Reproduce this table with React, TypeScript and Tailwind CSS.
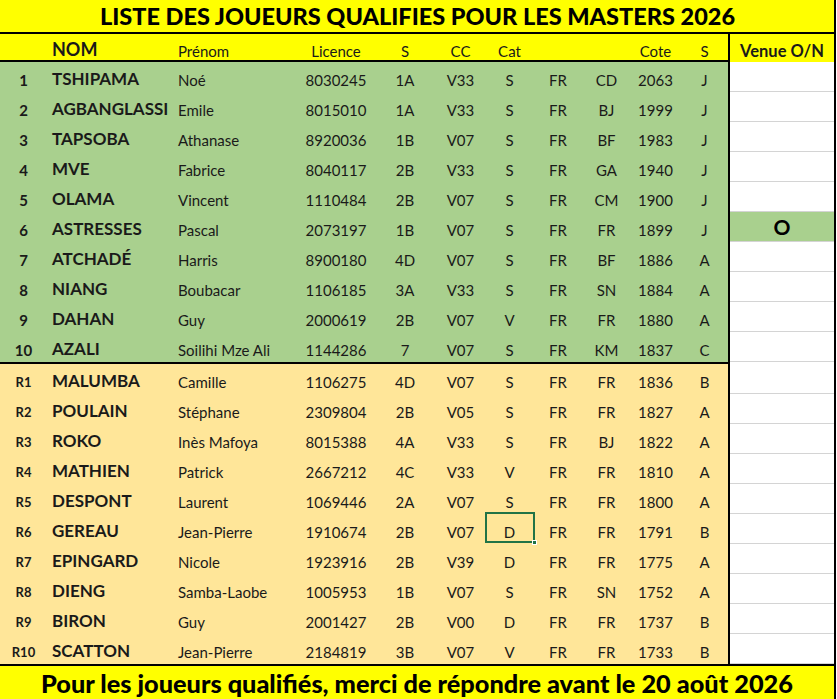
import React from 'react';

// Ligne : rang, nom, prénom, licence, S, CC, Cat, fédé, pays, cote, statut
type Row = [string, string, string, string, string, string, string, string, string, string, string];

const qualifies: Row[] = [
    ['1', 'TSHIPAMA', 'Noé', '8030245', '1A', 'V33', 'S', 'FR', 'CD', '2063', 'J'],
    ['2', 'AGBANGLASSI', 'Emile', '8015010', '1A', 'V33', 'S', 'FR', 'BJ', '1999', 'J'],
    ['3', 'TAPSOBA', 'Athanase', '8920036', '1B', 'V07', 'S', 'FR', 'BF', '1983', 'J'],
    ['4', 'MVE', 'Fabrice', '8040117', '2B', 'V33', 'S', 'FR', 'GA', '1940', 'J'],
    ['5', 'OLAMA', 'Vincent', '1110484', '2B', 'V07', 'S', 'FR', 'CM', '1900', 'J'],
    ['6', 'ASTRESSES', 'Pascal', '2073197', '1B', 'V07', 'S', 'FR', 'FR', '1899', 'J'],
    ['7', 'ATCHADÉ', 'Harris', '8900180', '4D', 'V07', 'S', 'FR', 'BF', '1886', 'A'],
    ['8', 'NIANG', 'Boubacar', '1106185', '3A', 'V33', 'S', 'FR', 'SN', '1884', 'A'],
    ['9', 'DAHAN', 'Guy', '2000619', '2B', 'V07', 'V', 'FR', 'FR', '1880', 'A'],
    ['10', 'AZALI', 'Soilihi Mze Ali', '1144286', '7', 'V07', 'S', 'FR', 'KM', '1837', 'C'],
];

const remplacants: Row[] = [
    ['R1', 'MALUMBA', 'Camille', '1106275', '4D', 'V07', 'S', 'FR', 'FR', '1836', 'B'],
    ['R2', 'POULAIN', 'Stéphane', '2309804', '2B', 'V05', 'S', 'FR', 'FR', '1827', 'A'],
    ['R3', 'ROKO', 'Inès Mafoya', '8015388', '4A', 'V33', 'S', 'FR', 'BJ', '1822', 'A'],
    ['R4', 'MATHIEN', 'Patrick', '2667212', '4C', 'V33', 'V', 'FR', 'FR', '1810', 'A'],
    ['R5', 'DESPONT', 'Laurent', '1069446', '2A', 'V07', 'S', 'FR', 'FR', '1800', 'A'],
    ['R6', 'GEREAU', 'Jean-Pierre', '1910674', '2B', 'V07', 'D', 'FR', 'FR', '1791', 'B'],
    ['R7', 'EPINGARD', 'Nicole', '1923916', '2B', 'V39', 'D', 'FR', 'FR', '1775', 'A'],
    ['R8', 'DIENG', 'Samba-Laobe', '1005953', '1B', 'V07', 'S', 'FR', 'SN', '1752', 'A'],
    ['R9', 'BIRON', 'Guy', '2001427', '2B', 'V00', 'D', 'FR', 'FR', '1737', 'B'],
    ['R10', 'SCATTON', 'Jean-Pierre', '2184819', '3B', 'V07', 'V', 'FR', 'FR', '1733', 'B'],
];

// Largeurs des colonnes (px) : n°, NOM, Prénom, Licence, S, CC, Cat, FR, pays, Cote, S
const cols = 'grid grid-cols-[47px_125px_126px_76px_62px_49px_49px_48px_49px_49px_49px]';

function DataRow({ row, selected }: { row: Row; selected?: boolean }) {
    const [rang, nom, prenom, ...rest] = row;
    return (
        <div className={`${cols} h-[30px] items-end pb-[3px] text-[15px] leading-[18px] text-[#1a1a1a]`}>
            <div className={`text-center font-bold ${rang.startsWith('R') ? 'text-[13px]' : 'text-[15px]'}`}>{rang}</div>
            <div className="pl-[5px] text-[17px] font-bold leading-[20px] whitespace-nowrap">{nom}</div>
            <div className="pl-[6px] whitespace-nowrap">{prenom}</div>
            {rest.map((v, i) => (
                <div key={i} className="relative text-center">
                    {v}
                    {/* cellule active façon tableur */}
                    {selected && i === 3 && (
                        <span className="absolute left-[0px] right-[-1px] top-[-11px] bottom-[-2px] border-2 border-[#217346]">
                            <span className="absolute right-[-4px] bottom-[-4px] h-[5px] w-[5px] bg-[#217346] border border-white" />
                        </span>
                    )}
                </div>
            ))}
        </div>
    );
}

function VenueCell({ value }: { value?: string }) {
    return (
        <div
            className={`h-[30px] border-b border-[#d4d4d4] flex items-end justify-center pb-[1px] text-[21px] font-bold leading-[26px] ${
                value ? 'bg-[#a9d08e]' : 'bg-white'
            }`}
        >
            {value}
        </div>
    );
}

export default function App() {
    return (
        <div className="w-[837px] h-[699px] bg-white font-['Lato',sans-serif] overflow-hidden">
            <div className="w-[836px] border-r-2 border-black">
                {/* Titre */}
                <div className="h-[34px] bg-[#ffff00] border-b-2 border-black flex items-end justify-center pb-[2px] pl-[1px]">
                    <h1 className="text-[23.5px] font-black leading-[28px] text-black">
                        LISTE DES JOUEURS QUALIFIES POUR LES MASTERS 2026
                    </h1>
                </div>

                <div className="flex">
                    {/* Tableau principal */}
                    <div className="w-[730px] border-r-2 border-black">
                        <div className={`${cols} h-[28px] bg-[#ffff00] border-b-2 border-black items-end pb-0 text-[15px] leading-[18px] text-[#1a1a1a]`}>
                            <div />
                            <div className="pl-[5px] text-[18px] font-bold leading-[21px]">NOM</div>
                            <div className="pl-[6px]">Prénom</div>
                            <div className="text-center">Licence</div>
                            <div className="text-center">S</div>
                            <div className="text-center">CC</div>
                            <div className="text-center">Cat</div>
                            <div />
                            <div />
                            <div className="text-center">Cote</div>
                            <div className="text-center">S</div>
                        </div>

                        <div className="bg-[#a9d08e] border-b-2 border-black">
                            {qualifies.map((r) => (
                                <DataRow key={r[0]} row={r} />
                            ))}
                        </div>

                        <div className="bg-[#ffe699]">
                            {remplacants.map((r) => (
                                <DataRow key={r[0]} row={r} selected={r[0] === 'R6'} />
                            ))}
                        </div>
                    </div>

                    {/* Colonne Venue O/N */}
                    <div className="flex-1">
                        <div className="h-[28px] bg-[#ffff00] flex items-end justify-center pb-[1px] text-[16.5px] font-bold leading-[20px] text-[#1a1a1a]">
                            Venue O/N
                        </div>
                        {qualifies.map((r) => (
                            <VenueCell key={r[0]} value={r[0] === '6' ? 'O' : undefined} />
                        ))}
                        <div className="h-[2px] bg-white" />
                        {remplacants.map((r) => (
                            <VenueCell key={r[0]} />
                        ))}
                    </div>
                </div>

                {/* Pied de page */}
                <div className="h-[35px] bg-[#ffff00] border-t-2 border-black flex items-center justify-center">
                    <p className="text-[25.3px] font-black leading-[30px] text-black">
                        Pour les joueurs qualifiés, merci de répondre avant le 20 août 2026
                    </p>
                </div>
            </div>
        </div>
    );
}
